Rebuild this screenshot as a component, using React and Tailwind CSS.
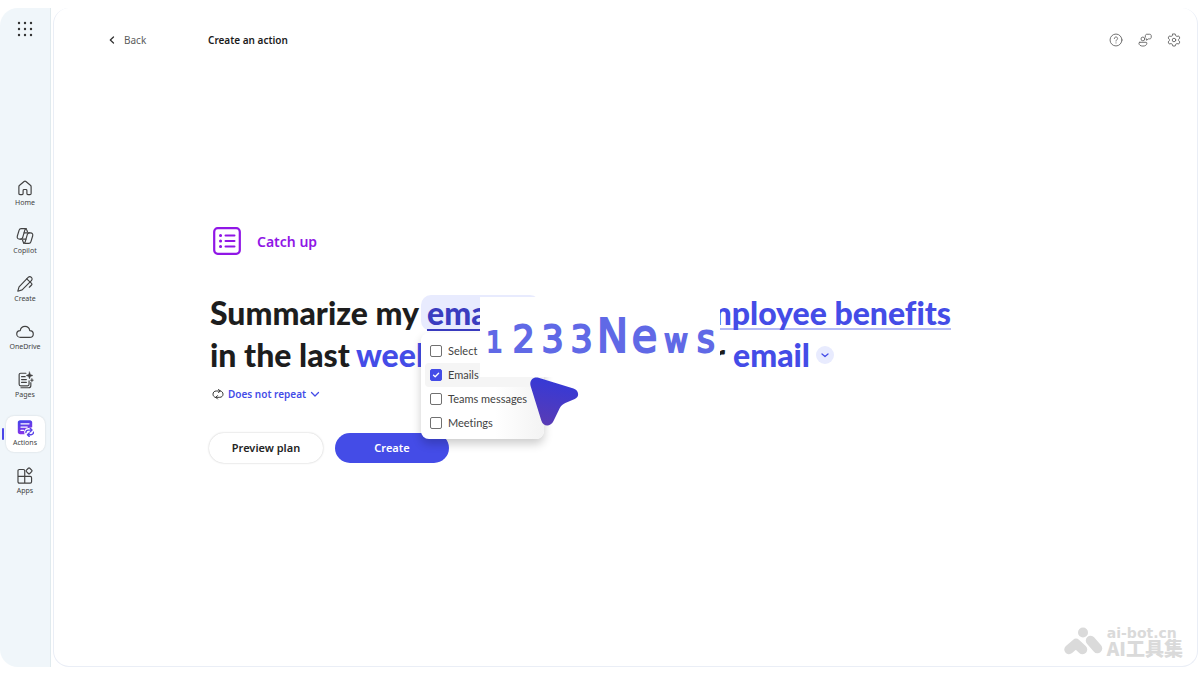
import React, { useState } from "react";

function Icon({ className, children, size = 20 }) {
  return (
    <svg
      viewBox={`0 0 ${size} ${size}`}
      className={className}
      fill="none"
      stroke="currentColor"
      strokeWidth="1.3"
      strokeLinecap="round"
      strokeLinejoin="round"
      aria-hidden="true"
    >
      {children}
    </svg>
  );
}

const navItems = [
  {
    label: "Home",
    icon: (
      <path d="M3.200 8.600c0-.6.3-1.200.8-1.600l5-4.200c.6-.5 1.400-.5 2 0l5 4.200c.5.400.8 1 .8 1.600v7.400c0 .8-.5 1.300-1.300 1.300h-2.200c-.7 0-1.200-.5-1.200-1.200v-3.400c0-.6-.4-1-1-1h-2.200c-.6 0-1 .4-1 1v3.400c0 .7-.5 1.200-1.200 1.200H4.500c-.8 0-1.300-.5-1.300-1.300z" />
    ),
  },
  {
    label: "Copilot",
    icon: (
      <>
        <path d="M12.700 5.200 12 3.300c-.3-.9-1-1.500-1.900-1.500H5.700c-1.100 0-1.900.7-2.200 1.700l-2 6.500c-.6 2 .4 3.500 2.400 3.500h1.300c1 0 1.800-.6 2.100-1.500L9.800 3.500c.3-.9.9-1.500 1.700-1.700" />
        <path d="M7.300 14.800 8 16.700c.3.900 1 1.500 1.900 1.500h4.400c1.100 0 1.900-.7 2.200-1.700l2-6.500c.6-2-.4-3.500-2.400-3.500h-1.300c-1 0-1.800.6-2.100 1.500l-2.500 8.500c-.3.900-.9 1.500-1.700 1.700" />
        <path d="M9 6.500h5.800M5.200 13.500H11" />
      </>
    ),
  },
  {
    label: "Create",
    icon: (
      <>
        <path d="M13.500 2.700c1-1 2.600-1 3.600 0s1 2.500 0 3.500L6.800 16.500 2 18l1.400-4.900z" />
        <path d="m11.900 4.300 5.400 5c.6.600.6 1.200 0 1.800l-2.500 2.500" />
      </>
    ),
  },
  {
    label: "OneDrive",
    icon: (
      <path d="M5 16c-2.400 0-4.200-1.600-4.200-3.800 0-2.100 1.600-3.700 3.900-3.800C5.200 5.700 7.300 3.800 10 3.800s4.800 1.900 5.300 4.600c2.300.1 3.900 1.700 3.900 3.800 0 2.200-1.800 3.800-4.200 3.800z" />
    ),
  },
  {
    label: "Pages",
    icon: (
      <>
        <path d="M11 2.500H5.200c-1 0-1.700.7-1.700 1.700v10.600c0 1 .7 1.700 1.700 1.700h7.600c1 0 1.700-.7 1.700-1.700V11" />
        <path d="M5.500 18.600h8.400c1.500 0 2.600-1.100 2.600-2.600v-3M6.200 6.300h4M6.200 9.500h5.300M6.200 12.700h5.300" />
        <path
          d="m15 1 1 2.800L18.800 5 16 6l-1 2.800L14 6l-2.800-1L14 3.800zM17.700 8.400l.5 1.300 1.300.5-1.300.5-.5 1.300-.5-1.300-1.300-.5 1.300-.5z"
          fill="currentColor"
          strokeWidth="0.5"
        />
      </>
    ),
  },
  {
    label: "Actions",
    active: true,
    icon: (
      <>
        <defs>
          <linearGradient id="actionsFill" x1="0" y1="0" x2="0.3" y2="1">
            <stop offset="0" stopColor="#3f47ea" />
            <stop offset="1" stopColor="#8a33e8" />
          </linearGradient>
        </defs>
        <path
          d="M4.500 1.500h11c1.400 0 2.500 1.100 2.500 2.500v5.300l-7 1.200-2 3 .5 3.500h-5C3.100 17 2 15.900 2 14.500V4c0-1.400 1.100-2.500 2.500-2.500z"
          fill="url(#actionsFill)"
          stroke="none"
        />
        <path d="M5.500 5.300h9M5.500 9h7M5.500 12.700h3" stroke="#fff" strokeWidth="1.400" />
        <path
          d="M11 15c0-1.600 1.100-2.700 2.700-2.700h4m-1.900-2 2 2-2 2M19.500 14.500c0 1.900-1.100 3-2.700 3h-4m1.900-2-2 2 2 2"
          stroke="#5b45e8"
          strokeWidth="1.500"
        />
      </>
    ),
  },
  {
    label: "Apps",
    icon: (
      <>
        <path d="M9.700 18H3.700c-.9 0-1.500-.6-1.500-1.500V4.300c0-.9.6-1.500 1.500-1.500h4.500c.9 0 1.500.6 1.500 1.500zM9.700 18h6.100c.9 0 1.500-.6 1.500-1.500v-4.600c0-.9-.6-1.500-1.500-1.500H2.200" />
        <path d="m13.700 1.400-2.100 2.100c-.5.500-.5 1.100 0 1.600l2.100 2.100c.5.500 1.100.5 1.600 0l2.100-2.100c.5-.5.500-1.100 0-1.600l-2.100-2.100c-.5-.5-1.100-.5-1.600 0z" />
      </>
    ),
  },
];

function Sidebar() {
  return (
    <aside className="flex w-[51px] shrink-0 flex-col items-center rounded-l-[18px] border-r border-[#e0eaee] bg-[#f0f6fa]">
      <button aria-label="App launcher" className="mt-[9px] p-1 text-[#333]">
        <svg viewBox="0 0 16 16" className="size-4" fill="currentColor" aria-hidden="true">
          {[2, 8, 14].map((y) => [2, 8, 14].map((x) => <circle key={`${x}-${y}`} cx={x} cy={y} r="1.200" />))}
        </svg>
      </button>
      <nav className="mt-[135px] flex w-full flex-col gap-3">
        {navItems.map((item) => (
          <a
            key={item.label}
            href="#"
            className={`relative mx-auto flex h-9 w-[39px] flex-col items-center justify-center rounded-lg text-[#424242] ${
              item.active ? "bg-white shadow-[0_0_2px_rgba(0,0,0,0.15)]" : ""
            }`}
          >
            {item.active && <span className="absolute top-3 -left-1 h-3 w-[2px] rounded-full bg-[#4b45e8]" />}
            <Icon className="size-[18px]">{item.icon}</Icon>
            <span className="text-[7px] leading-3">{item.label}</span>
          </a>
        ))}
      </nav>
    </aside>
  );
}

function Header() {
  return (
    <header className="flex h-16 items-center pr-4 pl-[54px] text-[10px]">
      <button className="flex w-[100px] items-center gap-2 text-[#5c5c5c]">
        <Icon className="size-2 text-[#333]" size={8}>
          <path d="M5.500 1 2.300 4l3.200 3" />
        </Icon>
        Back
      </button>
      <h2 className="font-semibold text-[#1b1b1b]">Create an action</h2>
      <div className="ml-auto flex items-center gap-[15px] text-[#666]">
        <button aria-label="Help">
          <Icon className="size-[14px]">
            <circle cx="10" cy="10" r="8.500" />
            <path d="M7.700 7.900c0-1.300 1-2.200 2.300-2.200s2.300.9 2.300 2.100c0 1.700-2.300 1.900-2.300 3.700M10 14.100v.2" />
          </Icon>
        </button>
        <button aria-label="Feedback">
          <Icon className="size-[14px]">
            <circle cx="7" cy="8.500" r="2.700" />
            <path d="M2.500 13.300h9c.7 0 1.200.5 1.200 1.200 0 2.500-2.200 4.200-5.700 4.200s-5.700-1.700-5.700-4.200c0-.7.500-1.200 1.200-1.200zM10.500 6V4c0-1.300.9-2.200 2.200-2.200h4c1.300 0 2.200.9 2.200 2.200v2.200c0 1.300-.9 2.200-2.200 2.200H15l-2.800 2V8.400" />
          </Icon>
        </button>
        <button aria-label="Settings">
          <Icon className="size-[14px]">
            <path d="M8.300 1.400h3.400l.7 2.500 1.800 1 2.500-.7 1.700 3L16.600 9v2l1.800 1.800-1.700 3-2.500-.7-1.800 1-.7 2.500H8.300l-.7-2.500-1.800-1-2.500.7-1.700-3L3.400 11V9L1.600 7.200l1.700-3 2.500.7 1.800-1z" />
            <circle cx="10" cy="10" r="2.500" />
          </Icon>
        </button>
      </div>
    </header>
  );
}

const sources = ["Select all", "Emails", "Teams messages", "Meetings"];

function SourceMenu() {
  const [checked, setChecked] = useState(["Emails"]);

  const toggle = (name) => {
    setChecked(checked.includes(name) ? checked.filter((c) => c !== name) : [...checked, name]);
  };

  return (
    <div className="absolute top-[41px] left-0 z-10 w-[123px] rounded-lg bg-gradient-to-r from-white from-60% to-[#f3f3f3] p-1 pt-[6px] text-[11px] leading-6 font-normal text-[#424242] shadow-[0_5px_10px_rgba(0,0,0,0.2)]">
      {sources.map((name) => (
        <label
          key={name}
          className={`flex h-6 items-center gap-[6px] rounded pl-[5px] whitespace-nowrap ${
            checked.includes(name) ? "bg-[#f5f5f5]" : ""
          }`}
        >
          <span className="relative flex size-3">
            <input
              type="checkbox"
              checked={checked.includes(name)}
              onChange={() => toggle(name)}
              className="size-3 appearance-none rounded-[2px] border border-[#707070] bg-white checked:border-[#444ce7] checked:bg-[#444ce7]"
            />
            {checked.includes(name) && (
              <Icon className="pointer-events-none absolute inset-0 size-3 text-white" size={12}>
                <path d="m3.500 6.200 1.700 1.600 3.400-3.500" />
              </Icon>
            )}
          </span>
          {name}
        </label>
      ))}
    </div>
  );
}

function Stamp() {
  return (
    <div className="absolute top-[5px] left-[270px] z-20 grid h-20 w-[240px] grid-cols-[29px_29px_29px_29px_33px_31px_32px_28px] items-baseline justify-items-center bg-white pt-4 font-['DejaVu_Sans_Condensed','DejaVu_Sans'] font-normal text-[#6069e6] [-webkit-text-stroke:2px_#6069e6] [stroke-linejoin:round]">
      <span className="text-[28px] leading-none">1</span>
      <span className="text-[38px] leading-none">2</span>
      <span className="text-[38px] leading-none">3</span>
      <span className="text-[38px] leading-none">3</span>
      <span className="text-[46px] leading-none">N</span>
      <span className="text-[46px] leading-none">e</span>
      <span className="text-[32px] leading-none">w</span>
      <span className="text-[38px] leading-none">s</span>
    </div>
  );
}

function Pointer() {
  return (
    <svg viewBox="0 0 50 50" className="pointer-events-none absolute top-[85px] left-[320px] z-30 size-[50px]" aria-hidden="true">
      <defs>
        <linearGradient id="pointerFill" x1="0.500" y1="0" x2="0.300" y2="1">
          <stop offset="0" stopColor="#3439d8" />
          <stop offset="1" stopColor="#593bb4" />
        </linearGradient>
      </defs>
      <path
        d="M8.500.8 43.500 11.500c5.500 1.800 6.300 8.300 1.300 10.500l-9.500 4c-2.500 1.200-4 2.500-5.500 5L23.500 44c-2.800 6-10.300 6-12.200-.5L.6 9C-.9 3.500 3.200-.7 8.500.8z"
        fill="url(#pointerFill)"
      />
    </svg>
  );
}

function Watermark() {
  return (
    <footer className="mt-auto flex items-center justify-end gap-1 pr-[14px] pb-[10px] text-[#dadada]">
      <svg viewBox="0 0 40 28" className="h-7 w-10" fill="currentColor" aria-hidden="true">
        <circle cx="20" cy="5.500" r="5" />
        <g stroke="currentColor" strokeWidth="9.500" strokeLinecap="round" strokeLinejoin="round" fill="none">
          <path d="M6 22.500 13 16.500l6.500 6" />
          <path d="m27.500 13.500 7 8" />
        </g>
      </svg>
      <div className="font-bold">
        <p className="font-['DejaVu_Sans'] text-[14px] leading-[14px]">ai-bot.cn</p>
        <p className="font-['Noto_Sans_CJK_SC',sans-serif] text-[19px] leading-4 font-black">AI工具集</p>
      </div>
    </footer>
  );
}

export default function App() {
  return (
    <div className="flex min-h-screen bg-white py-2 font-['Noto_Sans',sans-serif]">
      <Sidebar />
      <main className="mr-[2px] ml-[2px] flex min-w-0 flex-1 flex-col rounded-2xl border border-t-0 border-[#eaeef6]">
        <Header />
        <section className="pl-[155px]">
          <div className="mt-[155px] flex items-center gap-4 pl-1 text-[#9016e6]">
            <Icon className="size-7" size={28}>
              <rect x="1.200" y="1.200" width="25.600" height="25.600" rx="3.500" strokeWidth="2.200" />
              <path d="M12.500 8.500h9M12.500 14h9M12.500 19.500h9" strokeWidth="2" />
              <path d="M7.500 8.500h.1M7.500 14h.1M7.500 19.500h.1" strokeWidth="3" />
            </Icon>
            <span className="text-[14px] font-semibold">Catch up</span>
          </div>

          <div className="relative mt-[37px] ml-px">
            <h1 className="font-['Lato'] text-[32px] leading-[42px] font-black text-[#1d1d1d] [font-variant-ligatures:none]">
              <div className="flex whitespace-nowrap">
                <span className="w-[211px]">Summarize my</span>
                <span className="relative w-[119px] pt-[3px]">
                  <span className="block h-9 rounded-t-[10px] rounded-bl-[10px] bg-[#e8ebfe] px-[6px] text-[#3a3cc0]">
                    <span className="block h-9 border-b-2 border-[#3a3cc0] leading-9">emails</span>
                  </span>
                  <SourceMenu />
                </span>
                <span className="w-[411px] text-right text-[#444ce7]">
                  <span className="inline-block h-[38px] border-b-2 border-[#b4bbf6] leading-[42px]">employee benefits</span>
                </span>
              </div>
              <div className="flex whitespace-nowrap">
                <span className="w-[146px]">in the last</span>
                <span className="w-[294px] text-[#444ce7]">week</span>
                <span className="w-[75px] text-right">over</span>
                <span className="flex items-center gap-[6px] pl-2 text-[#444ce7]">
                  email
                  <button aria-label="Delivery options" className="rounded-full bg-[#e8ebfe] p-1">
                    <Icon className="size-[10px]" size={10}>
                      <path d="m2 4 3 2.500L8 4" />
                    </Icon>
                  </button>
                </span>
              </div>
            </h1>
            <Stamp />
            <Pointer />
          </div>

          <button className="mt-[10px] flex items-center gap-1 pl-[3px] text-[10px] leading-4 text-[#444ce7]">
            <Icon className="size-3 text-[#333]" size={12}>
              <path d="M3.500 9.500C2 9 1 7.800 1 6.200 1 4.400 2.300 3 4.200 3H8M6.500 1.300 8.200 3 6.500 4.700M8.500 2.900C10 3.400 11 4.600 11 6.200 11 8 9.700 9.300 7.800 9.300H4M5.500 7.600 3.800 9.300l1.700 1.700" strokeWidth="1" />
            </Icon>
            <span className="font-semibold">Does not repeat</span>
            <Icon className="size-[10px]" size={10}>
              <path d="M1.500 3.500 5 7l3.500-3.500" />
            </Icon>
          </button>

          <div className="mt-[31px] flex gap-3 text-[11px] font-semibold">
            <button className="h-[30px] w-[114px] rounded-full bg-white text-[#242424] shadow-[0_0_2px_rgba(0,0,0,0.25)]">Preview plan</button>
            <button className="h-[30px] w-[114px] rounded-full bg-[#444ce7] text-white">Create</button>
          </div>
        </section>
        <Watermark />
      </main>
    </div>
  );
}
